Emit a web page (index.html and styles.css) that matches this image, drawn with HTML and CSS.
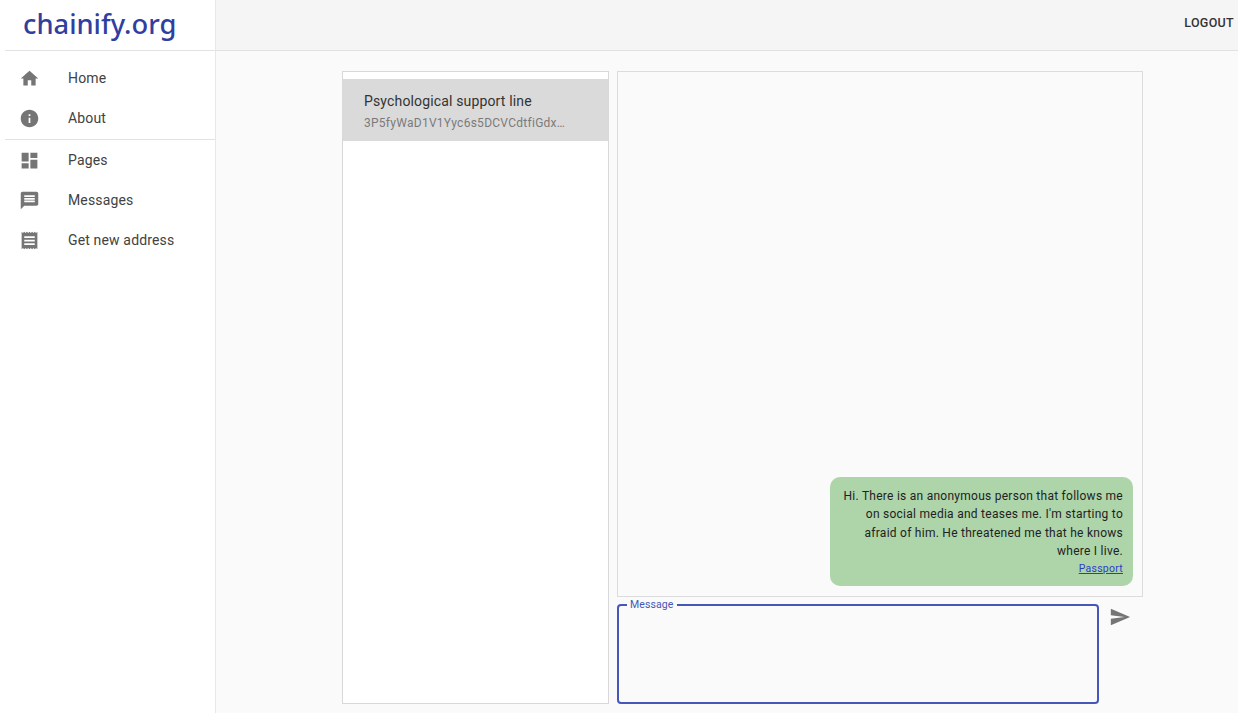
FILE: index.html
```html
<!DOCTYPE html>
<html lang="en">
<head>
<meta charset="utf-8">
<title>chainify.org</title>
<link rel="stylesheet" href="styles.css">
</head>
<body>
<div class="app">
  <aside class="sidebar">
    <div class="brand">chainify.org</div>
    <nav class="nav nav-first">
      <a class="nav-item"><svg class="nav-icon" viewBox="0 0 24 24"><path d="M10 20v-6h4v6h5v-8h3L12 3 2 12h3v8z"/></svg><span>Home</span></a>
      <a class="nav-item"><svg class="nav-icon" viewBox="0 0 24 24"><path d="M12 2C6.48 2 2 6.48 2 12s4.48 10 10 10 10-4.48 10-10S17.52 2 12 2zm1 15h-2v-6h2v6zm0-8h-2V7h2v2z"/></svg><span>About</span></a>
    </nav>
    <nav class="nav">
      <a class="nav-item"><svg class="nav-icon" viewBox="0 0 24 24"><path d="M3 13h8V3H3v10zm0 8h8v-6H3v6zm10 0h8V11h-8v10zm0-18v6h8V3h-8z"/></svg><span>Pages</span></a>
      <a class="nav-item"><svg class="nav-icon" viewBox="0 0 24 24"><path d="M20 2H4c-1.1 0-1.99.9-1.99 2L2 22l4-4h14c1.1 0 2-.9 2-2V4c0-1.1-.9-2-2-2zm-2 12H6v-2h12v2zm0-3H6V9h12v2zm0-3H6V6h12v2z"/></svg><span>Messages</span></a>
      <a class="nav-item"><svg class="nav-icon" viewBox="0 0 24 24"><path d="M18 17H6v-2h12v2zm0-4H6v-2h12v2zm0-4H6V7h12v2zM3 22l1.5-1.5L6 22l1.5-1.5L9 22l1.5-1.5L12 22l1.5-1.5L15 22l1.5-1.5L18 22l1.5-1.5L21 22V2l-1.5 1.5L18 2l-1.5 1.5L15 2l-1.5 1.5L12 2l-1.5 1.5L9 2 7.5 3.5 6 2 4.5 3.5 3 2v20z"/></svg><span>Get new address</span></a>
    </nav>
  </aside>
  <div class="content">
    <header class="topbar"><span class="logout">LOGOUT</span></header>
    <main class="main">
      <section class="threads">
        <div class="thread">
          <div class="thread-title">Psychological support line</div>
          <div class="thread-sub">3P5fyWaD1V1Yyc6s5DCVCdtfiGdx…</div>
        </div>
      </section>
      <section class="chat">
        <div class="messages">
          <div class="bubble">
            <p class="bubble-text">Hi. There is an anonymous person that follows me on social media and teases me. I'm starting to afraid of him. He threatened me that he knows where I live.</p>
            <a class="bubble-link" href="#">Passport</a>
          </div>
        </div>
        <div class="composer">
          <fieldset class="field"><legend class="field-label">Message</legend></fieldset>
          <svg class="send" viewBox="0 0 24 24"><path d="M2.01 21L23 12 2.01 3 2 10l15 2-15 2z"/></svg>
        </div>
      </section>
    </main>
  </div>
</div>
</body>
</html>
```
FILE: styles.css
```css
* { box-sizing: border-box; }
html, body { margin: 0; height: 100%; }
body { font-family: Roboto, "Liberation Sans", sans-serif; background: #fafafa; color: #212121; overflow: hidden; }
.app { display: grid; grid-template-columns: 216px 1fr; height: 713px; }
.sidebar { background: #fff; border-right: 1px solid #e8e8e8; padding-left: 5px; }
.brand { height: 51px; border-bottom: 1px solid #e2e2e2; padding-left: 18px; font-family: "Noto Sans", "Open Sans", sans-serif; font-size: 27.3px; line-height: 47px; font-weight: 500; color: #303f9f; }
.nav { display: flex; flex-direction: column; }
.nav-first { padding-top: 7px; height: 89px; border-bottom: 1px solid #e2e2e2; }
.nav-item { display: flex; align-items: center; height: 40px; padding-left: 14px; font-size: 14px; letter-spacing: 0.15px; color: #424242; }
.nav-icon { width: 21px; height: 21px; margin-right: 28px; fill: #757575; flex: none; }
.content { display: flex; flex-direction: column; min-width: 0; }
.topbar { height: 51px; background: #f5f5f5; border-bottom: 1px solid #e2e2e2; display: flex; justify-content: flex-end; align-items: center; padding: 0 4px 6px 0; }
.logout { font-size: 12.5px; font-weight: 500; letter-spacing: 0.3px; color: #333; }
.main { flex: 1; display: flex; gap: 8px; padding: 20px 95px 9px 126px; min-height: 0; }
.threads { width: 267px; flex: none; background: #fff; border: 1px solid #d8d8d8; padding-top: 7px; }
.thread { height: 62px; background: #dadada; padding: 13px 21px 0; }
.thread-title { font-size: 14px; line-height: 18px; letter-spacing: 0.15px; color: #333; }
.thread-sub { font-size: 12px; line-height: 18px; margin-top: 4px; letter-spacing: 0.27px; color: #7a7a7a; }
.chat { flex: 1; display: flex; flex-direction: column; min-width: 0; }
.messages { height: 526px; border: 1px solid #dcdcdc; display: flex; align-items: flex-end; justify-content: flex-end; padding: 0 9px 10px 0; background: #fafafa; }
.bubble { width: 303px; height: 109px; background: #aed4aa; border-radius: 10px; padding: 10px 10px 0 13px; text-align: right; color: #222; }
.bubble-text { margin: 0; font-size: 12px; line-height: 18.3px; letter-spacing: 0.26px; }
.bubble-link { display: block; margin-top: 2px; font-size: 10.5px; line-height: 14px; letter-spacing: 0.25px; color: #2a3fc7; }
.composer { display: flex; margin-top: 2px; flex: 1; min-height: 0; }
.field { width: 482px; height: 105px; margin: 0; border: 2px solid #4557b8; border-radius: 4px; padding: 0 8px; }
.field-label { font-size: 10.5px; line-height: 12px; padding: 0 4px 0 3px; margin-left: 0; color: #4557b8; letter-spacing: 0.1px; }
.send { width: 22px; height: 22px; margin: 7px 0 0 10px; fill: #757575; flex: none; }
```
